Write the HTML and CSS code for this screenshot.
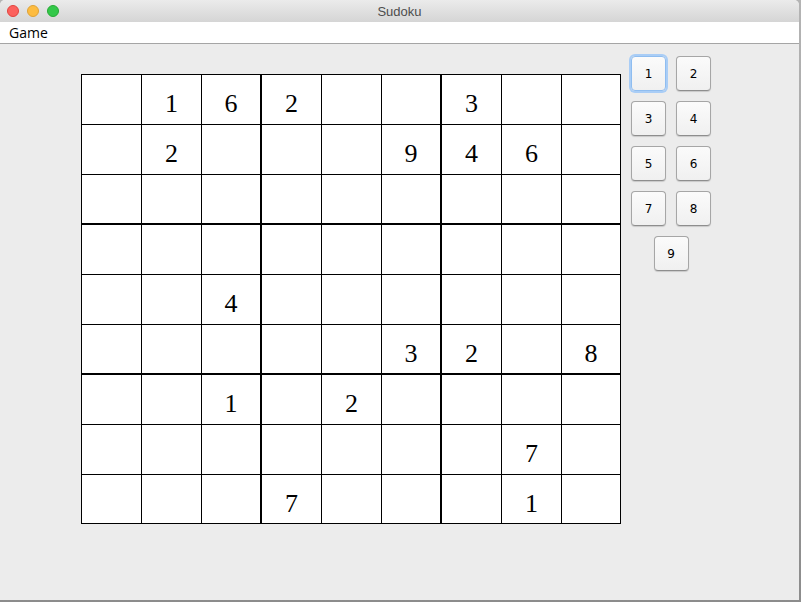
FILE: index.html
```html
<!DOCTYPE html>
<html>
<head>
<meta charset="utf-8">
<link rel="stylesheet" href="styles.css">
</head>
<body>
<div class="window">
  <div class="titlebar">
    <div class="lights">
      <span class="light red"></span>
      <span class="light yellow"></span>
      <span class="light green"></span>
    </div>
    <div class="title">Sudoku</div>
  </div>
  <div class="menubar"><span class="menu">Game</span></div>
  <div class="content">
    <div class="board">
      <div class="cell"></div><div class="cell">1</div><div class="cell bx">6</div><div class="cell">2</div><div class="cell"></div><div class="cell bx"></div><div class="cell">3</div><div class="cell"></div><div class="cell"></div>
      <div class="cell"></div><div class="cell">2</div><div class="cell bx"></div><div class="cell"></div><div class="cell"></div><div class="cell bx">9</div><div class="cell">4</div><div class="cell">6</div><div class="cell"></div>
      <div class="cell by"></div><div class="cell by"></div><div class="cell bx by"></div><div class="cell by"></div><div class="cell by"></div><div class="cell bx by"></div><div class="cell by"></div><div class="cell by"></div><div class="cell by"></div>
      <div class="cell"></div><div class="cell"></div><div class="cell bx"></div><div class="cell"></div><div class="cell"></div><div class="cell bx"></div><div class="cell"></div><div class="cell"></div><div class="cell"></div>
      <div class="cell"></div><div class="cell"></div><div class="cell bx">4</div><div class="cell"></div><div class="cell"></div><div class="cell bx"></div><div class="cell"></div><div class="cell"></div><div class="cell"></div>
      <div class="cell by"></div><div class="cell by"></div><div class="cell bx by"></div><div class="cell by"></div><div class="cell by"></div><div class="cell bx by">3</div><div class="cell by">2</div><div class="cell by"></div><div class="cell by">8</div>
      <div class="cell"></div><div class="cell"></div><div class="cell bx">1</div><div class="cell"></div><div class="cell">2</div><div class="cell bx"></div><div class="cell"></div><div class="cell"></div><div class="cell"></div>
      <div class="cell"></div><div class="cell"></div><div class="cell bx"></div><div class="cell"></div><div class="cell"></div><div class="cell bx"></div><div class="cell"></div><div class="cell">7</div><div class="cell"></div>
      <div class="cell"></div><div class="cell"></div><div class="cell bx"></div><div class="cell">7</div><div class="cell"></div><div class="cell bx"></div><div class="cell"></div><div class="cell">1</div><div class="cell"></div>
    </div>
    <div class="keypad">
      <button class="key focus">1</button>
      <button class="key">2</button>
      <button class="key">3</button>
      <button class="key">4</button>
      <button class="key">5</button>
      <button class="key">6</button>
      <button class="key">7</button>
      <button class="key">8</button>
      <button class="key">9</button>
    </div>
  </div>
</div>
</body>
</html>
```
FILE: styles.css
```css
html, body {
  margin: 0;
  padding: 0;
}
body {
  width: 801px;
  height: 602px;
  background: linear-gradient(to bottom, #b4b4b4, #8c8c8c);
  overflow: hidden;
  font-family: "DejaVu Sans", "Liberation Sans", sans-serif;
}
.window {
  width: 799px;
  height: 600px;
  background: #ececec;
  border-radius: 5px 5px 0 0;
  overflow: hidden;
  display: flex;
  flex-direction: column;
}
.titlebar {
  height: 22px;
  flex: none;
  background: linear-gradient(to bottom, #ebebeb, #d5d5d5);
  position: relative;
  display: flex;
  align-items: center;
  justify-content: center;
}
.lights {
  position: absolute;
  left: 7px;
  top: 5px;
  display: flex;
  gap: 8px;
}
.light {
  width: 12px;
  height: 12px;
  border-radius: 50%;
  box-sizing: border-box;
}
.red { background: #fc615d; border: 1px solid #e0443e; }
.yellow { background: #fdbc40; border: 1px solid #dea236; }
.green { background: #34c84a; border: 1px solid #27aa35; }
.title {
  font-family: "Liberation Sans", "DejaVu Sans", sans-serif;
  font-size: 13px;
  color: #4d4d4d;
  padding-top: 1px;
}
.menubar {
  height: 21px;
  flex: none;
  background: #ffffff;
  border-bottom: 1px solid #a5a5a5;
  display: flex;
  align-items: center;
}
.menu {
  font-family: "Open Sans", "DejaVu Sans", sans-serif;
  font-size: 14px;
  color: #000;
  padding-left: 9px;
}
.content {
  flex: 1;
  display: flex;
  align-items: flex-start;
  padding: 30px 0 0 81px;
}
.board {
  display: grid;
  grid-template-columns: repeat(8, 59px) 58px;
  grid-template-rows: repeat(8, 49px) 48px;
  gap: 1px;
  padding: 1px;
  background: #000;
}
.cell {
  background: #fff;
  display: flex;
  justify-content: center;
  align-items: flex-start;
  font-family: "Liberation Serif", "DejaVu Serif", serif;
  font-size: 26px;
  line-height: 1;
  padding-top: 16px;
  box-sizing: border-box;
  color: #000;
}
.cell.bx { border-right: 1px solid #000; }
.cell.by { border-bottom: 1px solid #000; }
.keypad {
  width: 80px;
  margin-left: 10px;
  margin-top: -18px;
  display: flex;
  flex-wrap: wrap;
  justify-content: center;
  gap: 10px;
}
.key {
  width: 35px;
  height: 35px;
  padding: 0;
  margin: 0;
  border: 1px solid #a6a6a6;
  border-bottom-color: #8e8e8e;
  border-radius: 4px;
  background: linear-gradient(to bottom, #fbfbfb, #f0f0f0);
  box-shadow: 0 1px 1px rgba(0,0,0,0.15);
  font-family: "DejaVu Sans", "Liberation Sans", sans-serif;
  font-size: 12px;
  color: #000;
}
.key.focus {
  border: 1px solid #8fbdf0;
  box-shadow: 0 0 0 2px #a9cdf6;
}
```
